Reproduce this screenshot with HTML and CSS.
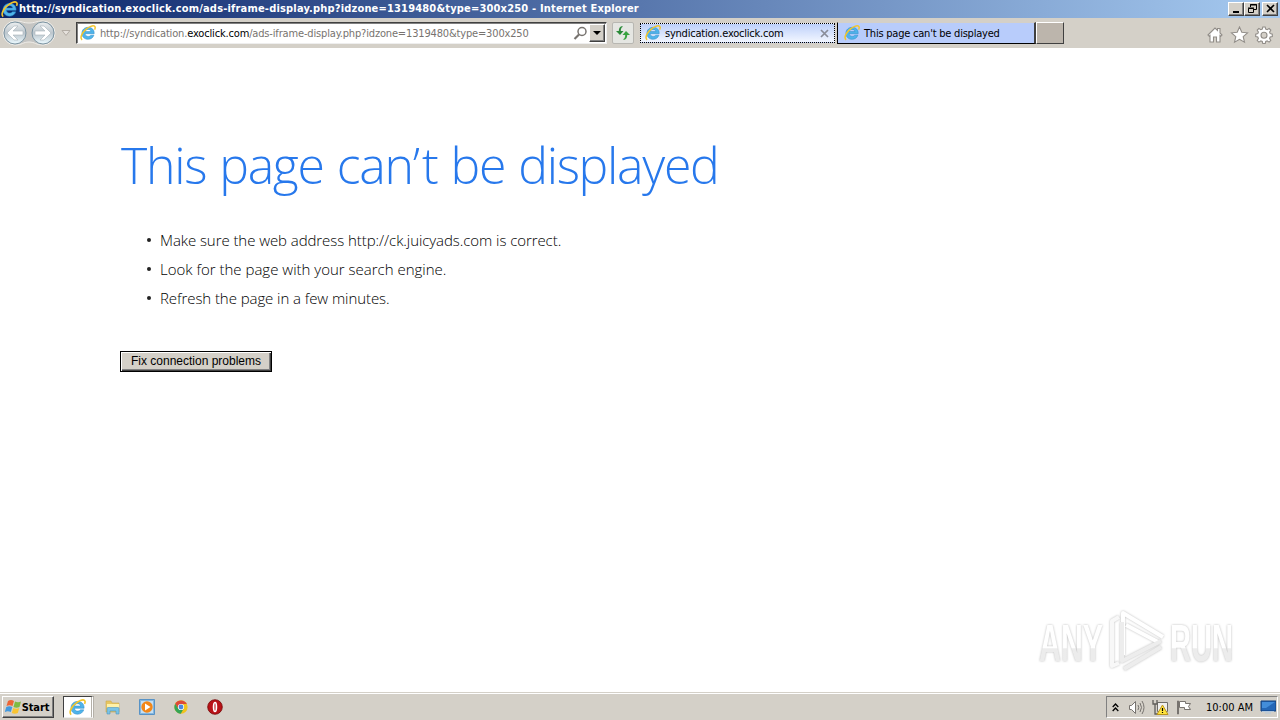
FILE: index.html
```html
<!DOCTYPE html>
<html lang="en">
<head>
    <meta charset="UTF-8">
    <title>This page can’t be displayed</title>
    <link rel="stylesheet" href="styles.css">
</head>
<body>

    <!-- Shared icon shapes -->
    <svg class="defs" width="0" height="0">
        <symbol id="ie" viewBox="0 0 16 16">
            <path d="M14.2 8.7H5.1c.2 1.7 1.4 2.7 3.1 2.7 1.2 0 2-.4 2.6-1.2h3.1c-.9 2.6-3 4.1-5.8 4.1-3.7 0-6.2-2.4-6.2-6 0-3.5 2.6-6 6.2-6 3.9 0 6.3 2.5 6.1 6.4zM11 6.6c-.2-1.400-1.300-2.200-2.900-2.200-1.500 0-2.600.8-2.900 2.200z" fill="#4fb4ea" stroke="#2a88c8" stroke-width=".5"/>
            <path d="M2.1 14.8C-.2 13 1.500 8.400 5.400 4.900 9 1.500 13 .1 14.500 1.200c.9.7.8 2 .1 3.400" fill="none" stroke="#f3c52b" stroke-width="1.500"/>
        </symbol>
    </svg>

    <header class="titlebar">
        <svg class="ie-icon" width="17" height="17"><use href="#ie"/></svg>
        <h1>http://syndication.exoclick.com/ads-iframe-display.php?idzone=1319480&amp;type=300x250 - Internet Explorer</h1>
        <div class="window-buttons">
            <button><svg width="11" height="10"><path d="M2 8h6" stroke="#000" stroke-width="2"/></svg></button>
            <button><svg width="11" height="10" fill="none" stroke="#000"><path d="M3.5 3V.5h6v5H7M3 1h7M1.5 4.5h5v4h-5zM1 4h6"/></svg></button>
            <button class="close"><svg width="11" height="10"><path d="M2 1l7 7M9 1L2 8" stroke="#000" stroke-width="1.6"/></svg></button>
        </div>
    </header>

    <nav class="toolbar">
        <svg class="history" width="72" height="28" viewBox="0 0 72 28">
            <path d="M15 2C22 2 23 4 29 4S36 2 43 2a12 12 0 0 1 0 24c-7 0-8-3-14-3s-7 3-14 3A12 12 0 0 1 15 2z" fill="#c5c5c3" stroke="#f0eeea"/>
            <circle cx="15" cy="14" r="11" fill="url(#glass)" stroke="#7c94a2"/>
            <circle cx="43" cy="14" r="11" fill="url(#glass)" stroke="#7c94a2"/>
            <path d="M7 14l7-7h4l-5 5h10v4H13l5 5h-4z M51 14l-7-7h-4l5 5H35v4h10l-5 5h4z" fill="#fff" stroke="#a8b4ba" stroke-width=".6"/>
            <path d="M62 11.5h8l-4 5z" fill="#e5e1dc" stroke="#b2aca4"/>
            <defs>
                <linearGradient id="glass" x2="0" y2="1">
                    <stop offset="0" stop-color="#eceff0"/><stop offset=".5" stop-color="#bcc6cd"/><stop offset="1" stop-color="#ecfaff"/>
                </linearGradient>
            </defs>
        </svg>
        <div class="address">
            <svg width="16" height="16"><use href="#ie"/></svg>
            <span class="url">http://syndication.<b>exoclick.com</b>/ads-iframe-display.php?idzone=1319480&amp;type=300x250</span>
            <svg class="search" width="15" height="15" fill="none" stroke="#77736f"><circle cx="9" cy="5.500" r="4" stroke-width="1.500"/><path d="M6 8.500L1.500 13" stroke-width="2.200"/></svg>
            <button class="drop"><svg width="8" height="4"><path d="M0 0h8L4 4z"/></svg></button>
        </div>
        <button class="refresh">
            <svg width="16" height="14"><path d="M7.500 0C5 .3 3.800 2 3.800 5H1l4 4 3.500-4H5.800c0-2 .5-3.500 1.700-4z" fill="#2b8a39"/><path d="M8.500 14c2.500-.3 3.700-2 3.700-5H15l-4-4-3.500 4h2.700c0 2-.5 3.500-1.700 4z" fill="#38a33f"/></svg>
        </button>
        <div class="tab active">
            <svg width="16" height="16"><use href="#ie"/></svg>
            <span>syndication.exoclick.com</span>
            <svg class="tab-close" width="9" height="9"><path d="M1 1l7 7M8 1L1 8" stroke="#898c98" stroke-width="1.700"/></svg>
        </div>
        <div class="tab">
            <svg width="16" height="16"><use href="#ie"/></svg>
            <span>This page can't be displayed</span>
        </div>
        <div class="new-tab"></div>
        <div class="tools">
            <svg width="66" height="18" viewBox="0 0 66 18" fill="#fff" stroke="#918d88" stroke-width="1.100">
                <path d="M1 9l7-7 2.500 2.500V2.500h2.500V7l2 2-1.200 1.200L13 9.500V16H9.500v-5h-3v5H3V9.500l-.8.700z"/>
                <path d="M32.500 1l2.300 5.200 5.700.6-4.300 3.800 1.300 5.600-5-2.900-5 2.900 1.300-5.600-4.300-3.800 5.700-.6z"/>
                <path d="M55.800 1h2.400l.5 2.100 1.500.6 1.900-1.200 1.700 1.700-1.200 1.900.6 1.500 2.100.5v2.400l-2.100.5-.6 1.500 1.200 1.900-1.700 1.700-1.900-1.200-1.500.6-.5 2.100h-2.400l-.5-2.100-1.500-.6-1.900 1.200-1.700-1.700 1.200-1.900-.6-1.500-2.100-.5V8.100l2.100-.5.600-1.500-1.200-1.900 1.700-1.700 1.900 1.200 1.500-.6z"/>
                <circle cx="57" cy="9.300" r="3" fill="#d4d0c8"/>
            </svg>
        </div>
    </nav>

    <main class="content">
        <h2>This page can<span>’</span>t be displayed</h2>
        <ul>
            <li class="address-tip">Make sure the web address http://ck.juicyads.com is correct.</li>
            <li>Look for the page with your search engine.</li>
            <li class="refresh-tip">Refresh the page in a few minutes.</li>
        </ul>
        <button class="fix">Fix connection problems</button>

        <!-- Watermark -->
        <svg class="watermark" width="220" height="76" viewBox="0 0 220 76">
            <defs>
                <linearGradient id="fade" x2="0" y2="1">
                    <stop offset="0" stop-color="#fff"/><stop offset=".58" stop-color="#fff"/><stop offset=".6" stop-color="#ececec"/><stop offset="1" stop-color="#ececec"/>
                </linearGradient>
            </defs>
            <g fill="url(#fade)">
                <text x="7" y="55" textLength="64" lengthAdjust="spacingAndGlyphs">ANY</text>
                <text x="138" y="55" textLength="63" lengthAdjust="spacingAndGlyphs">RUN</text>
            </g>
            <g fill="none" stroke="#fff" stroke-width="4" stroke-linejoin="round">
                <path d="M87 11l-7 4v45l7-3" stroke="#f8f8f8"/>
                <path d="M91 49V7l40 24M94 19l32 17"/>
                <path d="M90 16v39l39-20M92 63l37-22" stroke="#ededed"/>
            </g>
        </svg>
    </main>

    <footer class="taskbar">
        <button class="start">
            <svg width="17" height="16" viewBox="0 0 17 16">
                <path d="M3 2q3-2 6 0L7.500 7q-3-1.500-6 0z" fill="#ed6536"/>
                <path d="M10 2.500q3 1.500 6 0L14.500 8q-3 1.500-6 0z" fill="#7fba42"/>
                <path d="M1.300 8q3-1.500 6 0l-1.500 5q-3-1.500-6 0z" fill="#4299df"/>
                <path d="M8.300 9q3 1.500 6 0l-1.500 5q-3 1.500-6 0z" fill="#f9c432"/>
            </svg>
            <span>Start</span>
        </button>
        <div class="task-ie"><svg width="17" height="17"><use href="#ie"/></svg></div>
        <div class="quick">
            <svg width="16" height="16" viewBox="0 0 16 16">
                <path d="M1 2h5l1 2h7v9H1z" fill="#e7c661" stroke="#cfaa4a" stroke-width=".6"/><path d="M2 5h12v6H2z" fill="#fff1a8"/>
                <path d="M2 15V9.500q0-1 1-1h10q1 0 1 1V15h-3v-3H5v3z" fill="#7ac3e5" stroke="#5095bd" stroke-width=".6"/>
            </svg>
            <svg width="16" height="16" viewBox="0 0 16 16">
                <path d="M.5.5h15v15H.5z" fill="#84b7df" stroke="#5893c6"/><path d="M2 2h12v12H2z" fill="#c4dff4"/>
                <circle cx="8" cy="8" r="5.700" fill="#f28718"/><path d="M6 4.500l5.500 3.500L6 11.500z" fill="#fff"/>
            </svg>
            <svg width="16" height="16" viewBox="-1 -1 18 18">
                <circle cx="8" cy="8" r="7.500" fill="#f1c31d"/>
                <path d="M1.500 4.300A7.500 7.500 0 0 1 14.600 4.500H8L5 10z" fill="#dd4938"/>
                <path d="M1.500 4.300A7.500 7.500 0 0 0 7.700 15.500L11 10 8 8l-3 2z" fill="#34a456"/>
                <circle cx="8" cy="8" r="3.500" fill="#fff"/><circle cx="8" cy="8" r="2.700" fill="#4b87df"/>
            </svg>
            <svg width="16" height="16" viewBox="0 0 16 16">
                <circle cx="8" cy="8" r="7.300" fill="#b91217" stroke="#750808" stroke-width=".8"/>
                <ellipse cx="8" cy="8" rx="1.400" ry="4.500" fill="#b91217" stroke="#fff" stroke-width="1.700"/>
            </svg>
        </div>
        <div class="tray">
            <svg width="7" height="9" fill="none" stroke="#000" stroke-width="1.300"><path d="M.7 4l2.800-3 2.800 3M.7 8l2.800-3 2.800 3"/></svg>
            <svg class="sound" width="17" height="15" fill="none" stroke="#77736f"><path d="M1.500 5.500h2l4-4v12l-4-4h-2z" fill="#fff"/><path d="M10 5q1.500 2.500 0 5M12 3q3 4.500 0 9M14 1q4 6.500 0 13"/></svg>
            <svg class="net" width="17" height="17"><path d="M5.500 3.500h10v9h-10z" fill="#f0efed" stroke="#6e6c69"/><path d="M1 1v4h4V1M3 5v10h4" fill="none" stroke="#5f5d5a" stroke-width="1.300"/><path d="M10.500 6L16 15.500H5z" fill="#ffe43d" stroke="#bc951d"/><path d="M10.500 9v3M10.500 13v1" stroke="#000" stroke-width="1.200"/></svg>
            <svg class="flag" width="17" height="15" fill="#fff" stroke="#77736f"><path d="M1.500 1v13h1V1z"/><path d="M3.500 1.500h6v2h5l-2 3 2 3h-6v-2h-5z"/></svg>
            <span class="clock">10:00 AM</span>
            <svg class="desktop" width="16" height="14"><path d="M1 1h15v10H1z" fill="#2567b7" stroke="#123e7b"/><path d="M2 2h13L6 8H2z" fill="#438dda"/><path d="M2 11.500h12M5 13h6" stroke="#b5c8da"/></svg>
        </div>
    </footer>

</body>
</html>
```
FILE: styles.css
```css
* {
    box-sizing: border-box;
}
body {
    margin: 0;
    height: 720px;
    display: flex;
    flex-direction: column;
    overflow: hidden;
    background: #fff;
    color: #000;
    font-family: "DejaVu Sans Condensed", "DejaVu Sans", sans-serif;
    font-stretch: condensed;
    font-size: 11px;
}
button {
    display: flex;
    align-items: center;
    justify-content: center;
    padding: 0;
    background: #d4d0c8;
    border: 1px solid;
    border-color: #fff #404040 #404040 #fff;
    color: #000;
    font-family: inherit;
}
svg {
    flex: none;
}
.defs {
    display: none;
}

/* Title bar */
.titlebar {
    height: 18px;
    display: flex;
    align-items: center;
    padding: 0 2px 0 1px;
    background: linear-gradient(to right, #0a246a, #a6caf0);
}
.titlebar h1 {
    margin: 0 auto 0 1px;
    color: #fff;
    font-size: 11px;
    line-height: 18px;
    font-weight: bold;
    white-space: nowrap;
    letter-spacing: 0.18px;
}
.window-buttons {
    display: flex;
}
.window-buttons button {
    width: 16px;
    height: 14px;
    box-shadow: inset -1px -1px #808080;
}
.window-buttons .close {
    margin-left: 2px;
}

/* Navigation and tabs */
.toolbar {
    height: 30px;
    display: flex;
    align-items: center;
    background: #d4d0c8;
}
.address {
    width: 531px;
    height: 22px;
    margin: 0 0 0 4px;
    display: flex;
    align-items: center;
    padding: 0 1px 0 3px;
    background: #fff;
    border: 1px solid;
    border-color: #404040 #eee #eee #404040;
    box-shadow: inset 1px 1px #808080;
}
.url {
    margin-left: 4px;
    color: #77736f;
    white-space: nowrap;
    letter-spacing: -0.16px;
}
.url b {
    color: #000;
    font-weight: normal;
}
.search {
    margin-left: auto;
}
.drop {
    width: 16px;
    height: 18px;
    margin-left: 1px;
    box-shadow: inset -1px -1px #808080;
}
.refresh {
    width: 22px;
    height: 22px;
    margin: 0 6px 0 5px;
    background: #e5e6e2;
    border: 1px solid #b8b7b2;
    border-radius: 2px;
}
.tab {
    width: 199px;
    height: 22px;
    display: flex;
    align-items: center;
    padding: 0 5px 0 6px;
    background: #b8ccfb;
    border: 1px solid;
    border-color: #d4d0c8 #404040 #000 #fff;
    border-right-width: 2px;
}
.tab span {
    margin-left: 4px;
    white-space: nowrap;
    letter-spacing: -0.22px;
}
.tab.active {
    width: 195px;
    height: 20px;
    padding-left: 4px;
    margin-right: 2px;
    background: linear-gradient(#bdd0fa, #f2f6ff);
    border: 1px dotted #000;
}
.tab.active + .tab {
    border-left-color: #000;
}
.tab-close {
    margin-left: auto;
}
.new-tab {
    width: 28px;
    height: 22px;
    background: #bcb5ac;
    border: 1px solid;
    border-color: #fff #404040 #404040 #fff;
}
.tools {
    height: 18px;
    margin: 3px 7px 0 auto;
}

/* Error page */
.content {
    flex: 1;
    position: relative;
    padding: 81px 120px 0;
}
.content h2 {
    margin: 0;
    height: 72px;
    padding-left: 1px;
    color: #2778ec;
    font-family: "Open Sans", sans-serif;
    font-stretch: normal;
    font-size: 50px;
    font-weight: 300;
    line-height: 72px;
    white-space: nowrap;
    letter-spacing: -1.3px;
    word-spacing: 1.4px;
}
.content h2 span {
    letter-spacing: 2px;
}
.content ul {
    margin: 24px 0 39px;
    padding-left: 26px;
    list-style: none;
    font-family: "Open Sans", sans-serif;
    font-stretch: normal;
    font-size: 15px;
    font-weight: 300;
}
.content li {
    height: 29px;
    display: flex;
    align-items: center;
    white-space: nowrap;
}
.content li.address-tip,
.content li.refresh-tip {
    letter-spacing: -0.07px;
}
.content li::before {
    content: "";
    width: 4px;
    height: 4px;
    margin: 0 9px 0 1px;
    border-radius: 50%;
    background: #222;
}
.fix {
    width: 152px;
    height: 21px;
    border: 1px solid #000;
    box-shadow: inset 1px 1px #fff, inset -1px -1px #404040, inset -2px -2px #808080;
    font-family: "Liberation Sans", Arial, sans-serif;
    font-stretch: normal;
    font-size: 12px;
    line-height: 17px;
    padding-bottom: 1px;
}
.watermark {
    position: absolute;
    left: 1032px;
    bottom: 10px;
    overflow: visible;
    filter: drop-shadow(0 0 1px #bbb);
}
.watermark text {
    font: bold 52px "Liberation Sans", sans-serif;
}

/* Taskbar */
.taskbar {
    height: 28px;
    display: flex;
    align-items: center;
    padding: 1px 2px 0;
    background: #d4d0c8;
    border-top: 1px solid #d4d0c8;
    box-shadow: inset 0 1px #fff;
}
.start {
    width: 52px;
    height: 22px;
    font-size: 11px;
    font-weight: bold;
    letter-spacing: -0.1px;
    padding-right: 2px;
    box-shadow: inset -1px -1px #808080;
}
.task-ie {
    width: 31px;
    height: 22px;
    margin-left: 9px;
    display: flex;
    align-items: center;
    justify-content: center;
    background: #fff;
    border: 1px solid;
    border-color: #404040 #eee #eee #404040;
    border-right: 3px double #b4b0a8;
}
.quick {
    display: flex;
    align-items: center;
    gap: 18px;
    margin-left: 11px;
}
.tray {
    width: 172px;
    height: 22px;
    margin-left: auto;
    display: flex;
    align-items: center;
    padding: 0 1px 0 5px;
    border: 1px solid;
    border-color: #808080 #fff #fff #808080;
}
.sound {
    margin-left: 9px;
}
.net, .flag {
    margin-left: 7px;
}
.clock {
    margin-left: 13px;
    white-space: nowrap;
}
.desktop {
    margin-left: auto;
}
```
